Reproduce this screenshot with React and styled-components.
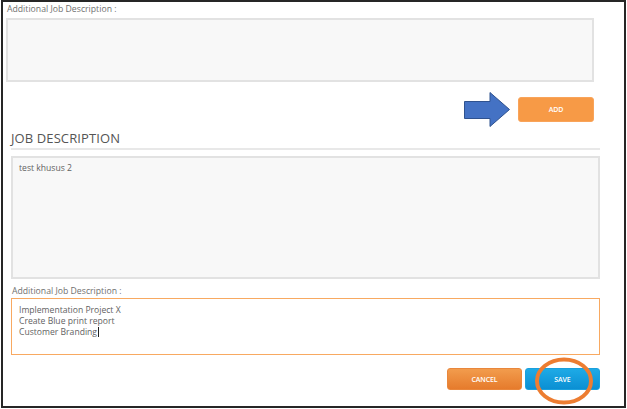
import React from 'react';
import styled, { createGlobalStyle } from 'styled-components';

const GlobalStyle = createGlobalStyle`
  html, body {
    margin: 0;
    padding: 0;
    background: #ffffff;
  }
  body {
    font-family: "Open Sans", "DejaVu Sans", sans-serif;
  }
`;

const Frame = styled.div`
  box-sizing: border-box;
  width: 625px;
  height: 408px;
  margin-left: 1px;
  border: 2px solid #262626;
  box-shadow: 0 1px 0 #9a9a9a;
  padding-top: 1px;
  background: #fff;
`;

const Section = styled.div`
  display: flex;
  flex-direction: column;
  padding: ${p => p.$pad};
`;

const Label = styled.div`
  font-size: 8.7px;
  line-height: 12px;
  color: #707070;
  white-space: nowrap;
  margin-top: ${p => p.$top || 0}px;
  margin-bottom: ${p => p.$bottom || 0}px;
  padding-left: ${p => p.$indent || 0}px;
`;

const Field = styled.div`
  box-sizing: border-box;
  height: ${p => p.$h}px;
  margin-top: ${p => p.$top || 0}px;
  padding: ${p => (p.$active ? '6px 7px' : '5px 6px')};
  background: ${p => (p.$active ? '#ffffff' : '#f8f8f8')};
  border: ${p => (p.$active ? '1px solid #f8a961' : '2px solid #e2e2e2')};
  font-size: 8.6px;
  line-height: 11px;
  color: #626262;
`;

const Line = styled.div`
  white-space: nowrap;
`;

const Caret = styled.span`
  display: inline-block;
  width: 1px;
  height: 10px;
  margin-left: 0.5px;
  vertical-align: -2px;
  background: #222;
`;

const ActionRow = styled.div`
  display: flex;
  justify-content: flex-end;
  align-items: center;
  height: ${p => p.$h}px;
  gap: ${p => p.$gap}px;
  margin-top: ${p => p.$top}px;
`;

const Button = styled.button`
  position: relative;
  box-sizing: border-box;
  width: ${p => p.$w}px;
  height: ${p => p.$h}px;
  padding: 0;
  border-radius: 3px;
  border: 1px solid ${p => p.$edge};
  background: ${p => p.$bg};
  color: #fff;
  font-family: "Open Sans", "DejaVu Sans", sans-serif;
  font-size: 7px;
  font-weight: 600;
  letter-spacing: -0.1px;
  cursor: pointer;
`;

const Heading = styled.h2`
  margin: 7px 0 0;
  padding: 0 0 1px 0;
  font-size: 13px;
  line-height: 18px;
  font-weight: 400;
  color: #555;
  letter-spacing: 0.1px;
  border-bottom: 2px solid #e8e8e8;
`;

const ArrowMark = styled.svg`
  margin: -5px 0;
  flex: none;
`;

const Ring = styled.svg`
  position: absolute;
  left: 9px;
  top: -12px;
  pointer-events: none;
  overflow: visible;
`;

const Arrow = () => (
  <ArrowMark width="46" height="35" viewBox="0 0 46 35">
    <polygon
      points="0.5,9.5 26,9.5 26,0.5 45.5,17.5 26,34.5 26,26.5 0.5,26.5"
      fill="#4472c4"
      stroke="#2f528f"
      strokeWidth="1"
    />
  </ArrowMark>
);

export default function App() {
  return (
    <>
      <GlobalStyle />
      <Frame>
        <Section $pad="0 30px 0 3px">
          <Label $indent={1} $bottom={3}>Additional Job Description :</Label>
          <Field $h={64} />
          <ActionRow $h={25} $gap={8} $top={15}>
            <Arrow />
            <Button $w={76} $h={25} $bg="#f79a46" $edge="#f9a45a">ADD</Button>
          </ActionRow>
        </Section>

        <Section $pad="0 24px 0 8px">
          <Heading>JOB DESCRIPTION</Heading>
          <Field $h={123} $top={6}>
            <Line>test khusus 2</Line>
          </Field>
          <Label $top={6} $bottom={1} $indent={1}>Additional Job Description :</Label>
          <Field $h={57} $active>
            <Line>Implementation Project X</Line>
            <Line>Create Blue print report</Line>
            <Line>Customer Branding<Caret /></Line>
          </Field>
          <ActionRow $h={22} $gap={3} $top={13}>
            <Button
              $w={75}
              $h={22}
              $bg="linear-gradient(#f29c4d, #e67b2c)"
              $edge="#e9873c"
            >
              CANCEL
            </Button>
            <Button
              $w={75}
              $h={22}
              $bg="linear-gradient(#1eaae6, #0b8fd3)"
              $edge="#1aa0dd"
            >
              SAVE
              <Ring width="58" height="48" viewBox="0 0 58 48">
                <ellipse cx="29" cy="24" rx="27" ry="21.5" fill="none" stroke="#ed7d31" strokeWidth="4" />
              </Ring>
            </Button>
          </ActionRow>
        </Section>
      </Frame>
    </>
  );
}
